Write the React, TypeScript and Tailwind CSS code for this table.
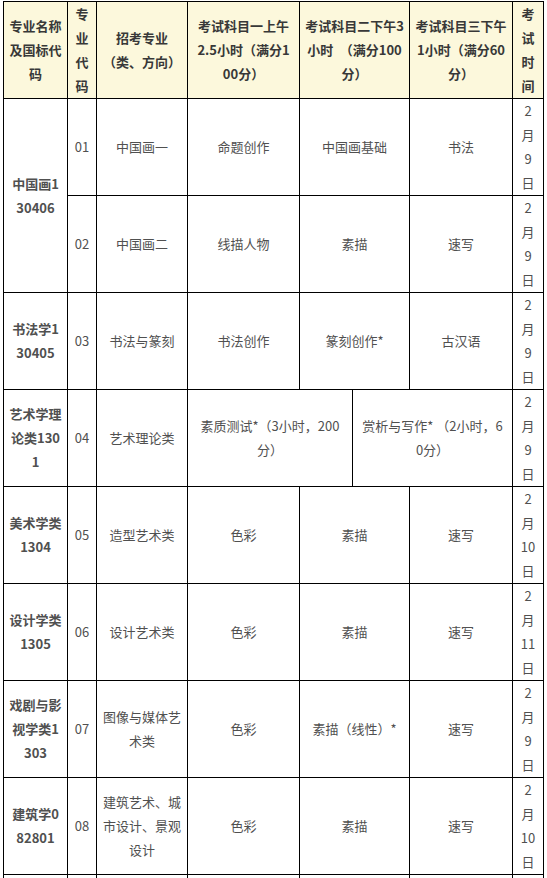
import React from "react"

const Lines = ({ lines }: { lines: string[] }) => (
  <>
    {lines.map((l, i) => (
      <div key={i}>{l}</div>
    ))}
  </>
)

type Row = {
  name?: string[]
  span?: number
  code: string
  major: string[]
  s1?: string
  s2?: string
  s3?: string
  date: string[]
}

const rows: Row[] = [
  { name: ["中国画1", "30406"], span: 2, code: "01", major: ["中国画一"], s1: "命题创作", s2: "中国画基础", s3: "书法", date: ["2", "月", "9", "日"] },
  { code: "02", major: ["中国画二"], s1: "线描人物", s2: "素描", s3: "速写", date: ["2", "月", "9", "日"] },
  { name: ["书法学1", "30405"], code: "03", major: ["书法与篆刻"], s1: "书法创作", s2: "篆刻创作*", s3: "古汉语", date: ["2", "月", "9", "日"] },
  { name: ["艺术学理", "论类130", "1"], code: "04", major: ["艺术理论类"], date: ["2", "月", "9", "日"] },
  { name: ["美术学类", "1304"], code: "05", major: ["造型艺术类"], s1: "色彩", s2: "素描", s3: "速写", date: ["2", "月", "10", "日"] },
  { name: ["设计学类", "1305"], code: "06", major: ["设计艺术类"], s1: "色彩", s2: "素描", s3: "速写", date: ["2", "月", "11", "日"] },
  { name: ["戏剧与影", "视学类1", "303"], code: "07", major: ["图像与媒体艺", "术类"], s1: "色彩", s2: "素描（线性）*", s3: "速写", date: ["2", "月", "9", "日"] },
  { name: ["建筑学0", "82801"], code: "08", major: ["建筑艺术、城", "市设计、景观", "设计"], s1: "色彩", s2: "素描", s3: "速写", date: ["2", "月", "10", "日"] },
]

const th = "border border-black bg-[#fcf8dc] px-[4px] py-0 align-middle text-center font-bold text-[#383838]"
const td = "border border-black px-[4px] py-0 align-middle text-center text-[#505050]"

export default function App() {
  return (
    <div className="min-h-screen bg-white pl-[3px] pt-px" style={{ fontFamily: '"Noto Sans CJK SC", "Noto Sans", sans-serif' }}>
      <table className="w-[541px] table-fixed border-collapse text-[13px] leading-[24px]">
        <colgroup>
          <col className="w-[64px]" />
          <col className="w-[29px]" />
          <col className="w-[91px]" />
          <col className="w-[112px]" />
          <col className="w-[110px]" />
          <col className="w-[103px]" />
          <col className="w-[31px]" />
        </colgroup>
        <thead>
          <tr>
            <th className={th}><Lines lines={["专业名称", "及国标代", "码"]} /></th>
            <th className={th}><Lines lines={["专", "业", "代", "码"]} /></th>
            <th className={th}><Lines lines={["招考专业", "（类、方向）"]} /></th>
            <th className={th}><Lines lines={["考试科目一上午", "2.5小时（满分1", "00分）"]} /></th>
            <th className={th}><Lines lines={["考试科目二下午3", "小时　（满分100", "分）"]} /></th>
            <th className={th}><Lines lines={["考试科目三下午", "1小时（满分60", "分）"]} /></th>
            <th className={th}><Lines lines={["考", "试", "时", "间"]} /></th>
          </tr>
        </thead>
        <tbody>
          {rows.map((r) => (
            <tr key={r.code}>
              {r.name && (
                <td rowSpan={r.span} className={`${td} font-bold text-[#383838]`}>
                  <Lines lines={r.name} />
                </td>
              )}
              <td className={td}>{r.code}</td>
              <td className={td}><Lines lines={r.major} /></td>
              {r.code === "04" ? (
                <td colSpan={3} className="border border-black p-0 align-middle text-center text-[#505050]">
                  <div className="flex h-[96px]">
                    <div className="flex w-[165px] flex-col items-center justify-center border-r border-black px-[4px]">
                      <div>素质测试*（3小时，200</div>
                      <div>分）</div>
                    </div>
                    <div className="flex flex-1 flex-col items-center justify-center px-[4px]">
                      <div>赏析与写作* （2小时，6</div>
                      <div>0分）</div>
                    </div>
                  </div>
                </td>
              ) : (
                <>
                  <td className={td}>{r.s1}</td>
                  <td className={td}>{r.s2}</td>
                  <td className={td}>{r.s3}</td>
                </>
              )}
              <td className={td}><Lines lines={r.date} /></td>
            </tr>
          ))}
          <tr>
            <td className={td}>&nbsp;</td>
            <td className={td}></td>
            <td className={td}></td>
            <td className={td}></td>
            <td className={td}></td>
            <td className={td}></td>
            <td className={td}></td>
          </tr>
        </tbody>
      </table>
    </div>
  )
}
